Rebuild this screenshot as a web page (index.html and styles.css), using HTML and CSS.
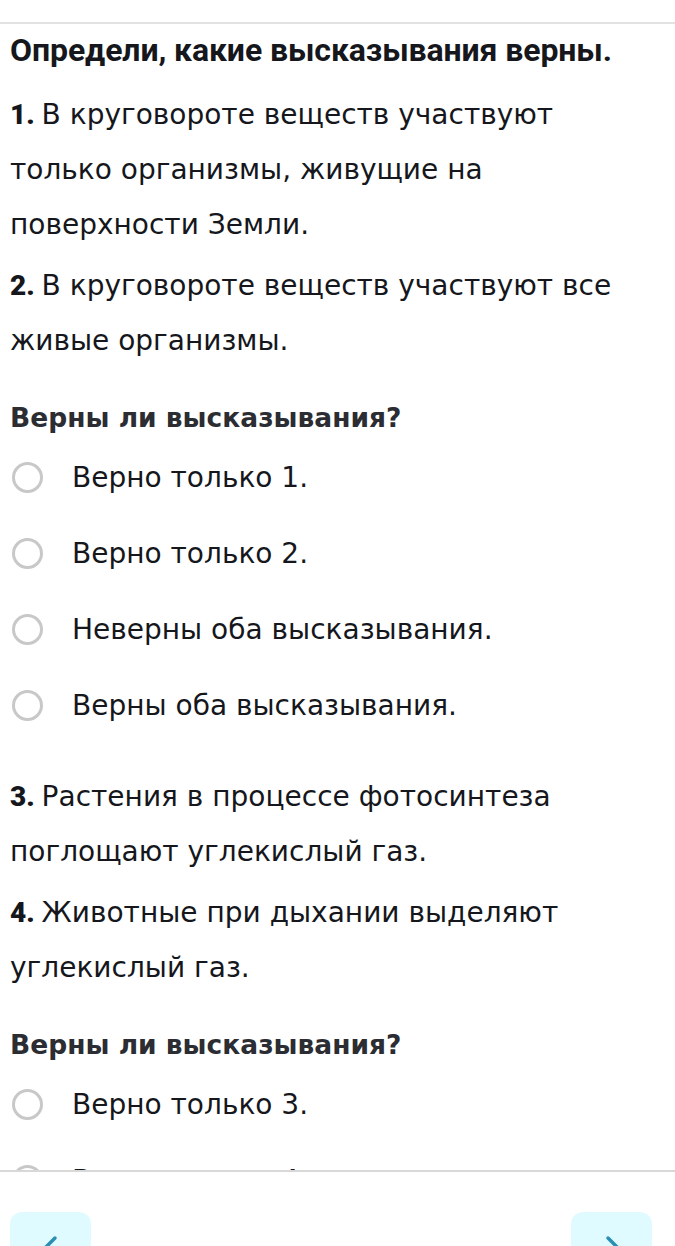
FILE: index.html
```html
<!DOCTYPE html>
<html lang="ru">

<head>
    <meta charset="UTF-8">
    <title>Задание</title>
    <link rel="stylesheet" href="styles.css">
</head>

<body>
    <div class="top-line"></div>

    <div class="task">
        <h1 class="task-title">Определи, какие высказывания верны.</h1>

        <p class="statement"><b>1.</b> В круговороте веществ участвуют только организмы, живущие на поверхности Земли.</p>
        <p class="statement"><b>2.</b> В круговороте веществ участвуют все живые организмы.</p>

        <h2 class="question">Верны ли высказывания?</h2>
        <ul class="options">
            <li class="option"><span class="radio"></span>Верно только 1.</li>
            <li class="option"><span class="radio"></span>Верно только 2.</li>
            <li class="option"><span class="radio"></span>Неверны оба высказывания.</li>
            <li class="option"><span class="radio"></span>Верны оба высказывания.</li>
        </ul>

        <p class="statement"><b>3.</b> Растения в процессе фотосинтеза поглощают углекислый газ.</p>
        <p class="statement"><b>4.</b> Животные при дыхании выделяют углекислый газ.</p>

        <h2 class="question">Верны ли высказывания?</h2>
        <ul class="options">
            <li class="option"><span class="radio"></span>Верно только 3.</li>
            <li class="option"><span class="radio"></span>Верно только 4.</li>
            <li class="option"><span class="radio"></span>Неверны оба высказывания.</li>
            <li class="option"><span class="radio"></span>Верны оба высказывания.</li>
        </ul>
    </div>

    <!-- нижняя панель навигации -->
    <div class="nav-bar">
        <button class="nav-btn">
            <svg width="30" height="30" viewBox="0 0 30 30"><path d="M19 4 L9 14 L19 24" fill="none" stroke="#2a8fb3" stroke-width="3.5" stroke-linecap="round"/></svg>
        </button>
        <button class="nav-btn">
            <svg width="30" height="30" viewBox="0 0 30 30"><path d="M11 4 L21 14 L11 24" fill="none" stroke="#2a8fb3" stroke-width="3.5" stroke-linecap="round"/></svg>
        </button>
    </div>
</body>

</html>
```

FILE: styles.css
```css
body {
    margin: 0;
    font-family: "DejaVu Sans", "Noto Sans", sans-serif;
    color: #15171c;
    background: #fff;
    overflow: hidden;
    height: 1246px;
}

.top-line {
    height: 22px;
    border-bottom: 2px solid #e2e2e2;
}

.task {
    padding: 0 38px 0 10px;
}

.task-title {
    margin: 6px 0 17px;
    font-family: Roboto, sans-serif;
    font-size: 32px;
    font-weight: bold;
    letter-spacing: -0.1px;
    line-height: 40px;
}

.statement {
    margin: 0 0 6px;
    font-size: 28px;
    line-height: 55px;
}

.statement b {
    font-family: Roboto, sans-serif;
    font-weight: 900;
    margin-right: -2px;
}

.question {
    margin: 30px 0 1px;
    font-size: 26.5px;
    font-weight: bold;
    color: #2b2d33;
    line-height: 40px;
}

.options {
    list-style: none;
    margin: 0 0 26px;
    padding: 0;
}

.option {
    display: flex;
    align-items: center;
    height: 76px;
    font-size: 28px;
}

.radio {
    width: 25px;
    height: 25px;
    border: 3px solid #c8c8c8;
    border-radius: 50%;
    margin: 0 29px 0 2px;
}

/* The bottom bar (sits on top) */
.nav-bar {
    position: fixed;
    left: 0;
    right: 0;
    bottom: 0;
    box-sizing: border-box;
    height: 76px;
    background: #fff;
    border-top: 2px solid #d8d8d8;
    display: flex;
    justify-content: space-between;
    padding: 40px 23px 0 10px;
}

.nav-btn {
    width: 81px;
    height: 70px;
    border: none;
    border-radius: 12px;
    background: #e0fbff;
    display: flex;
    justify-content: center;
    padding-top: 22px;
}
```
